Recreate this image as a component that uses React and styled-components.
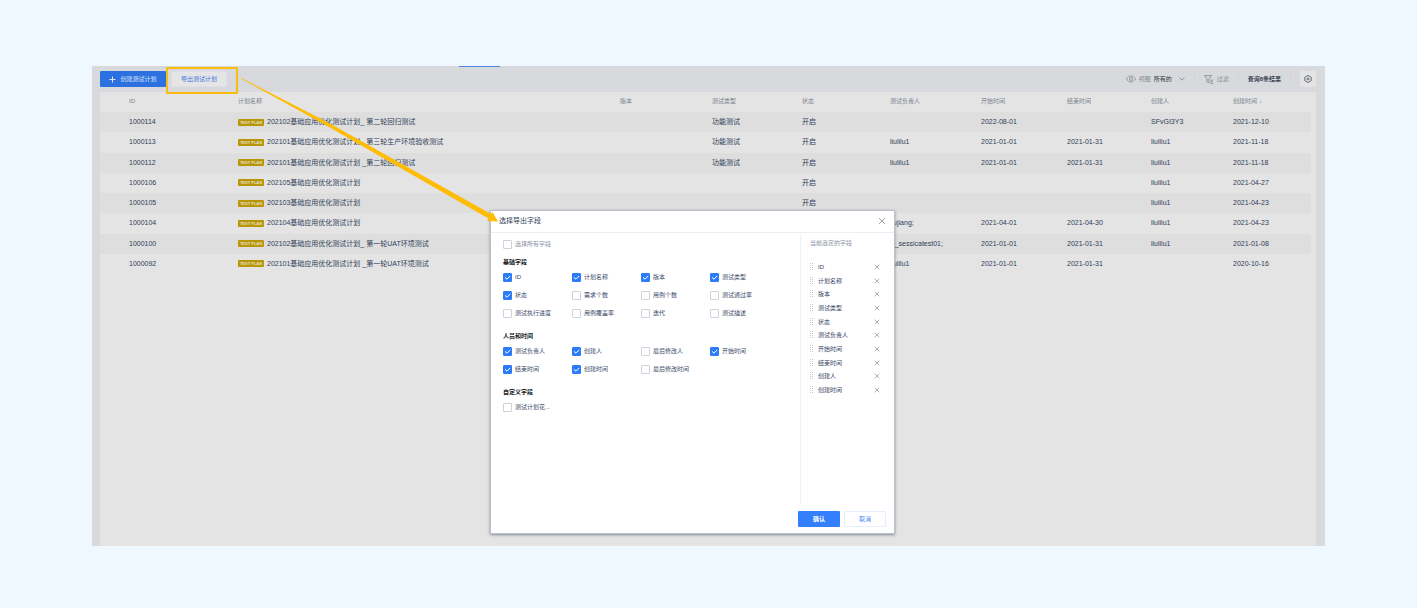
import React, { useState } from "react";
import styled, { createGlobalStyle, css } from "styled-components";

const Global = createGlobalStyle`
  * { box-sizing: border-box; }
  body {
    margin: 0;
    background: #eff7ff;
    font-family: "Liberation Sans", "Noto Sans CJK SC", sans-serif;
    color: #2f3d58;
  }
  button, input, select { font-family: inherit; margin: 0; }
`;

const Page = styled.main`
  min-height: 100vh;
  padding: 66px 92px 62px;
  display: flex;
`;

const Panel = styled.section`
  position: relative;
  flex: 1;
  min-width: 0;
  padding: 0 9px 0 8px;
  background: #d8d9dc;
  display: flex;
  flex-direction: column;
`;

const ActiveTab = styled.span`
  position: absolute;
  left: 367px;
  top: 0;
  width: 41px;
  height: 1px;
  background: #4f86dd;
`;

const Toolbar = styled.div`
  display: flex;
  align-items: center;
  justify-content: space-between;
  height: 26px;
`;

const Group = styled.div`
  display: flex;
  align-items: center;
  gap: ${(p) => p.$gap}px;
`;

const Button = styled.button`
  display: flex;
  align-items: center;
  justify-content: center;
  gap: 4px;
  width: ${(p) => p.$width}px;
  height: 16px;
  padding: 0;
  border: 1px solid transparent;
  border-radius: 1px;
  font-size: 6px;
  line-height: 8px;
  white-space: nowrap;
  ${(p) =>
    ({
      create: css`background: #2d71e0; color: #dce6f6;`,
      export: css`background: #e5e5e6; border-color: #dcdfe8; color: #4176e0;`,
      confirm: css`background: #347ffc; color: #fff; font-weight: 700;`,
      cancel: css`background: #fff; border-color: #e6eefd; color: #4787f8;`,
    })[p.$kind]}
`;

const Highlight = styled.span`
  position: absolute;
  left: 74px;
  top: 1px;
  width: 72px;
  height: 27px;
  border: 2px solid #fbbc10;
  border-radius: 1px;
  pointer-events: none;
`;

const ViewLabel = styled.label`
  font-size: 6px;
  line-height: 8px;
  color: #85898f;
`;

const ViewSelect = styled.select`
  appearance: none;
  width: 22px;
  padding: 0;
  border: 0;
  background: transparent;
  font-size: 6px;
  line-height: 8px;
  color: #2d323b;
`;

const FilterButton = styled.button`
  display: flex;
  align-items: center;
  gap: 3px;
  padding: 0;
  border: 0;
  background: transparent;
  font-size: 6px;
  line-height: 8px;
  color: #85898f;
`;

const Separator = styled.span`
  width: 1px;
  height: 10px;
  background: #d2d3d6;
`;

const ResultCount = styled.span`
  font-size: 6px;
  line-height: 8px;
  font-weight: 700;
  color: #394150;
`;

const GearButton = styled.button`
  display: grid;
  place-items: center;
  width: 16px;
  height: 16px;
  padding: 0;
  border: 0;
  border-radius: 1px;
  background: #e4e4e5;
`;

const Card = styled.div`
  flex: 1;
  padding-right: 5px;
  background: #e4e4e4;
`;

const Table = styled.table`
  width: 100%;
  height: 182px;
  table-layout: fixed;
  border-collapse: collapse;
  th, td {
    height: 20px;
    padding: 0;
    text-align: left;
    white-space: nowrap;
    font-size: 7px;
    line-height: 10px;
  }
  th {
    padding-bottom: 2px;
    font-size: 6px;
    font-weight: 400;
    color: #7a828e;
  }
  th:first-child, td:first-child { padding-left: 29px; }
  tbody tr:nth-child(odd) { background: #dedede; }
`;

const Col = styled.col`
  width: ${(p) => (p.$width ? `${p.$width}px` : "auto")};
`;

const Badge = styled.span`
  display: inline-block;
  width: 26px;
  height: 7px;
  margin-right: 3px;
  border-radius: 1px;
  background: #b79708;
  color: #e6dfc0;
  font-size: 4px;
  font-weight: 700;
  line-height: 7px;
  text-align: center;
  vertical-align: middle;
`;

const PlanName = styled.span`
  vertical-align: middle;
`;

const SortMark = styled.span`
  margin-left: 2px;
  color: #5c8ade;
`;

const Dialog = styled.div`
  position: absolute;
  left: 398px;
  top: 144px;
  width: 405px;
  display: flex;
  flex-direction: column;
  background: #fff;
  border: 1px solid #b9c0c9;
  border-radius: 1px;
  box-shadow: 0 1px 3px rgba(60, 70, 85, 0.55);
`;

const DialogHeader = styled.header`
  display: flex;
  align-items: center;
  justify-content: space-between;
  height: 22px;
  padding: 0 8px 1px;
  border-bottom: 1px solid #e9f0f5;
`;

const DialogTitle = styled.h2`
  margin: 0;
  font-size: 7px;
  line-height: 10px;
  font-weight: 400;
`;

const IconButton = styled.button`
  display: grid;
  place-items: center;
  padding: 0;
  border: 0;
  background: transparent;
`;

const DialogBody = styled.div`
  display: flex;
  height: 271px;
  padding-top: 2px;
`;

const Fields = styled.div`
  flex: 1;
  padding: 1px 0 0 12px;
`;

const Section = styled.fieldset`
  margin: 0 0 8px;
  padding: 0;
  border: 0;
`;

const SectionTitle = styled.legend`
  height: 12px;
  padding: 0;
  font-size: 6px;
  line-height: 12px;
  font-weight: 700;
  color: #16181d;
`;

const Options = styled.div`
  display: grid;
  grid-template-columns: repeat(4, 69px);
  grid-auto-rows: 18px;
`;

const Option = styled.label`
  display: flex;
  align-items: center;
  gap: 3px;
  font-size: 6px;
  line-height: 8px;
  white-space: nowrap;
  color: ${(p) => (p.$muted ? "#8a93a3" : "#3c4a68")};
  ${(p) => p.$muted && css`height: 16px; margin-bottom: 4px;`}
`;

const Box = styled.span`
  display: grid;
  width: 9px;
  height: 9px;
  > * { grid-area: 1 / 1; }
`;

const Tick = styled.input`
  appearance: none;
  width: 9px;
  height: 9px;
  border: 1px solid #ccd3dc;
  border-radius: 1px;
  background: #fff;
  &:checked { background: #2b7bfb; border-color: #2b7bfb; }
  & + svg { visibility: hidden; pointer-events: none; }
  &:checked + svg { visibility: visible; }
`;

const Chosen = styled.aside`
  width: 94px;
  padding: 4px 14px 0 9px;
  border-left: 1px solid #eef1f5;
`;

const ChosenTitle = styled.h3`
  margin: 0 0 12px;
  font-size: 6px;
  line-height: 9px;
  font-weight: 400;
  color: #8a93a3;
`;

const ChosenList = styled.ul`
  display: flex;
  flex-direction: column;
  height: 137px;
  margin: 0;
  padding: 0;
  list-style: none;
`;

const ChosenItem = styled.li`
  flex: 1;
  display: flex;
  align-items: center;
  justify-content: space-between;
  font-size: 6px;
  line-height: 8px;
  color: #35435f;
`;

const DialogFooter = styled.footer`
  display: flex;
  justify-content: flex-end;
  gap: 4px;
  padding: 7px 8px 6px;
`;

const Arrow = styled.svg`
  position: absolute;
  left: 148px;
  top: 12px;
  width: 260px;
  height: 148px;
  pointer-events: none;
`;

const Cross = ({ size, width }) => (
  <svg width={size} height={size} viewBox="0 0 8 8" stroke="#8f98a6" strokeWidth={width} fill="none">
    <path d="M1 1 7 7M7 1 1 7" />
  </svg>
);

const Plus = () => (
  <svg width="7" height="7" viewBox="0 0 7 7" stroke="#dce6f6" fill="none">
    <path d="M3.5 0.5v6M0.5 3.5h6" />
  </svg>
);

const Eye = () => (
  <svg width="10" height="8" viewBox="0 0 10 8" stroke="#858a91" strokeWidth="0.8" fill="none">
    <path d="M0.5 4C1.6 2 3.1 1 5 1s3.4 1 4.5 3C8.400 6 6.900 7 5 7S1.600 6 0.500 4Z" />
    <circle cx="5" cy="4" r="1.500" />
  </svg>
);

const Chevron = () => (
  <svg width="6" height="4" viewBox="0 0 6 4" stroke="#7c8188" strokeWidth="0.8" fill="none">
    <path d="M0.500 0.600 3 3.200 5.500 0.600" />
  </svg>
);

const Funnel = () => (
  <svg width="10" height="9" viewBox="0 0 10 9" stroke="#7f848b" strokeWidth="0.8" fill="none">
    <path d="M0.500 0.600H7.500L5 3.800V8L3 6.800V3.800ZM6.500 5.200H9M6.500 6.800H9M6.500 8.400H9" />
  </svg>
);

const Gear = () => (
  <svg width="8" height="8" viewBox="0 0 8 8" stroke="#565d69" strokeWidth="0.900" fill="none">
    <path d="M4 0.500 7.200 2.300V5.700L4 7.500 0.800 5.700V2.300Z" strokeLinejoin="round" />
    <circle cx="4" cy="4" r="1" />
  </svg>
);

const Grip = () => (
  <svg width="4" height="8" viewBox="0 0 4 8" fill="#c4c9d0">
    {[0, 2, 4, 6].map((y) => (
      <path key={y} d={`M0 ${y}h1v1h-1zM2 ${y}h1v1h-1z`} />
    ))}
  </svg>
);

const Check = () => (
  <svg width="9" height="9" viewBox="0 0 9 9" stroke="#fff" strokeWidth="1" fill="none">
    <path d="M2 4.400 4 6.200 7.200 2.900" />
  </svg>
);

const columns = [
  ["ID", 138],
  ["计划名称", 0],
  ["版本", 92],
  ["测试类型", 90],
  ["状态", 88],
  ["测试负责人", 91],
  ["开始时间", 86],
  ["结束时间", 84],
  ["创建人", 82],
  ["创建时间", 78],
];

const plans = [
  ["1000114", "202102基础应用优化测试计划_ 第二轮回归测试", "", "功能测试", "开启", "", "2022-08-01", "", "SFvGI3Y3", "2021-12-10"],
  ["1000113", "202101基础应用优化测试计划 _第三轮生产环境验收测试", "", "功能测试", "开启", "liulilu1", "2021-01-01", "2021-01-31", "liulilu1", "2021-11-18"],
  ["1000112", "202101基础应用优化测试计划 _第二轮回归测试", "", "功能测试", "开启", "liulilu1", "2021-01-01", "2021-01-31", "liulilu1", "2021-11-18"],
  ["1000106", "202105基础应用优化测试计划", "", "", "开启", "", "", "", "liulilu1", "2021-04-27"],
  ["1000105", "202103基础应用优化测试计划", "", "", "开启", "", "", "", "liulilu1", "2021-04-23"],
  ["1000104", "202104基础应用优化测试计划", "", "", "", "liujiang;", "2021-04-01", "2021-04-30", "liulilu1", "2021-04-23"],
  ["1000100", "202102基础应用优化测试计划_ 第一轮UAT环境测试", "", "", "", "A_sessicatest01;", "2021-01-01", "2021-01-31", "liulilu1", "2021-01-08"],
  ["1000092", "202101基础应用优化测试计划 _第一轮UAT环境测试", "", "", "", "liulilu1", "2021-01-01", "2021-01-31", "", "2020-10-16"],
];

const sections = [
  ["基础字段", ["ID", "计划名称", "版本", "测试类型", "状态", "需求个数", "用例个数", "测试通过率", "测试执行进度", "用例覆盖率", "迭代", "测试描述"]],
  ["人员和时间", ["测试负责人", "创建人", "最后修改人", "开始时间", "结束时间", "创建时间", "最后修改时间"]],
  ["自定义字段", ["测试计划花..."]],
];

const allFields = sections.flatMap(([, names]) => names);

function Field({ name, checked, onChange, muted }) {
  return (
    <Option $muted={muted}>
      <Box>
        <Tick type="checkbox" checked={checked} onChange={onChange} />
        <Check />
      </Box>
      {name}
    </Option>
  );
}

export default function App() {
  const [chosen, setChosen] = useState(columns.map(([name]) => name));
  const toggle = (name) =>
    setChosen((list) => (list.includes(name) ? list.filter((n) => n !== name) : [...list, name]));
  const all = chosen.length === allFields.length;

  return (
    <>
      <Global />
      <Page>
        <Panel>
          <ActiveTab />
          <Toolbar>
            <Group $gap={5}>
              <Button $kind="create" $width={66}>
                <Plus />
                创建测试计划
              </Button>
              <Button $kind="export" $width={56}>导出测试计划</Button>
            </Group>
            <Group $gap={9}>
              <Group $gap={3}>
                <Eye />
                <ViewLabel htmlFor="view">视图</ViewLabel>
                <ViewSelect id="view" defaultValue="all">
                  <option value="all">所有的</option>
                </ViewSelect>
                <Chevron />
              </Group>
              <Separator />
              <FilterButton>
                <Funnel />
                过滤
              </FilterButton>
              <Separator />
              <ResultCount>查询8条结果</ResultCount>
              <Separator />
              <GearButton aria-label="设置">
                <Gear />
              </GearButton>
            </Group>
          </Toolbar>
          <Card>
            <Table>
              <colgroup>
                {columns.map(([name, width]) => (
                  <Col key={name} $width={width} />
                ))}
              </colgroup>
              <thead>
                <tr>
                  {columns.map(([name], i) => (
                    <th key={name} scope="col">
                      {name}
                      {i === 9 && <SortMark>↓</SortMark>}
                    </th>
                  ))}
                </tr>
              </thead>
              <tbody>
                {plans.map((plan) => (
                  <tr key={plan[0]}>
                    {plan.map((value, i) => (
                      <td key={i}>
                        {i === 1 ? (
                          <>
                            <Badge>TEST PLAN</Badge>
                            <PlanName>{value}</PlanName>
                          </>
                        ) : (
                          value
                        )}
                      </td>
                    ))}
                  </tr>
                ))}
              </tbody>
            </Table>
          </Card>

          <Highlight />

          <Dialog role="dialog" aria-labelledby="dialog-title">
            <DialogHeader>
              <DialogTitle id="dialog-title">选择导出字段</DialogTitle>
              <IconButton aria-label="关闭">
                <Cross size={8} width={0.9} />
              </IconButton>
            </DialogHeader>
            <DialogBody>
              <Fields>
                <Field
                  muted
                  name="选择所有字段"
                  checked={all}
                  onChange={() => setChosen(all ? [] : allFields)}
                />
                {sections.map(([title, names]) => (
                  <Section key={title}>
                    <SectionTitle>{title}</SectionTitle>
                    <Options>
                      {names.map((name) => (
                        <Field
                          key={name}
                          name={name}
                          checked={chosen.includes(name)}
                          onChange={() => toggle(name)}
                        />
                      ))}
                    </Options>
                  </Section>
                ))}
              </Fields>
              <Chosen>
                <ChosenTitle>当前选定的字段</ChosenTitle>
                <ChosenList>
                  {chosen.map((name) => (
                    <ChosenItem key={name}>
                      <Group $gap={4}>
                        <Grip />
                        {name}
                      </Group>
                      <IconButton aria-label={`移除${name}`} onClick={() => toggle(name)}>
                        <Cross size={6} width={1} />
                      </IconButton>
                    </ChosenItem>
                  ))}
                </ChosenList>
              </Chosen>
            </DialogBody>
            <DialogFooter>
              <Button $kind="confirm" $width={42}>确认</Button>
              <Button $kind="cancel" $width={42}>取消</Button>
            </DialogFooter>
          </Dialog>

          <Arrow viewBox="0 0 260 148" fill="#ffbc05">
            <path d="M1 0.500 1.500 0 90 45.500 251 136 252.500 134 258 143.500 247 143 248.500 140.500 89 49Z" />
          </Arrow>
        </Panel>
      </Page>
    </>
  );
}
